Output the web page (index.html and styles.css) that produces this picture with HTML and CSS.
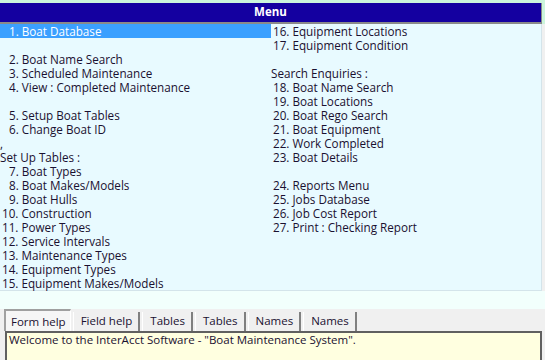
FILE: index.html
```html
<!DOCTYPE html>
<html lang="en">
<head>
  <meta charset="UTF-8" />
  <title>Menu</title>
  <link rel="stylesheet" href="styles.css">
</head>
<body>
  <div class="top">
    <div class="title-bar">Menu</div>
  </div>

  <div class="panel">
    <div class="col left">
      <div class="item one selected">1. Boat Database</div>
      <div class="item"></div>
      <div class="item one">2. Boat Name Search</div>
      <div class="item one">3. Scheduled Maintenance</div>
      <div class="item one">4. View : Completed Maintenance</div>
      <div class="item"></div>
      <div class="item one">5. Setup Boat Tables</div>
      <div class="item one">6. Change Boat ID</div>
      <div class="item">,</div>
      <div class="item">Set Up Tables :</div>
      <div class="item one">7. Boat Types</div>
      <div class="item one">8. Boat Makes/Models</div>
      <div class="item one">9. Boat Hulls</div>
      <div class="item two">10. Construction</div>
      <div class="item two">11. Power Types</div>
      <div class="item two">12. Service Intervals</div>
      <div class="item two">13. Maintenance Types</div>
      <div class="item two">14. Equipment Types</div>
      <div class="item two">15. Equipment Makes/Models</div>
    </div>
    <div class="col right">
      <div class="item two">16. Equipment Locations</div>
      <div class="item two">17. Equipment Condition</div>
      <div class="item"></div>
      <div class="item">Search Enquiries :</div>
      <div class="item two">18. Boat Name Search</div>
      <div class="item two">19. Boat Locations</div>
      <div class="item two">20. Boat Rego Search</div>
      <div class="item two">21. Boat Equipment</div>
      <div class="item two">22. Work Completed</div>
      <div class="item two">23. Boat Details</div>
      <div class="item"></div>
      <div class="item two">24. Reports Menu</div>
      <div class="item two">25. Jobs Database</div>
      <div class="item two">26. Job Cost Report</div>
      <div class="item two">27. Print : Checking Report</div>
    </div>
  </div>

  <div class="gap"></div>

  <div class="help">
    <div class="tabs">
      <div class="tab active">Form help</div>
      <div class="tab">Field help</div>
      <div class="tab">Tables</div>
      <div class="tab">Tables</div>
      <div class="tab">Names</div>
      <div class="tab">Names</div>
    </div>
    <div class="help-box">Welcome to the InterAcct Software - "Boat Maintenance System".</div>
  </div>
</body>
</html>
```

FILE: styles.css
```css
* {
  box-sizing: border-box;
}

body {
  margin: 0;
  width: 545px;
  height: 360px;
  overflow: hidden;
  background: #f0f0f0;
  font-family: "Open Sans", "Noto Sans", sans-serif;
  font-size: 11.7px;
  color: #1a1030;
}

.top {
  background: #ccf5dc;
  padding-top: 3px;
}

.title-bar {
  width: 542px;
  height: 21px;
  background: #1400a0;
  border-bottom: 2px solid #8a8a8a;
  border-right: 1px solid #8a8a8a;
  color: #fff;
  font-size: 11.5px;
  font-weight: bold;
  text-align: center;
  line-height: 18px;
}

.panel {
  display: grid;
  grid-template-columns: 271px 1fr;
  width: 542px;
  height: 267px;
  background: #e8faff;
  border-right: 1px solid #d4e4ea;
  border-bottom: 1px solid #d4e4ea;
}

.item {
  height: 14px;
  line-height: 14px;
  white-space: nowrap;
}

.left .one {
  padding-left: 9px;
}

.left .two,
.right .two {
  padding-left: 2px;
}

.item.selected {
  background: #3ba0ff;
  color: #fff;
}

.gap {
  height: 18px;
  background: #f2fffc;
}

.help {
  padding: 0 3px 0 4px;
}

.tabs {
  display: flex;
  align-items: flex-end;
  gap: 2px;
  height: 22px;
}

.tab {
  height: 19px;
  line-height: 18px;
  padding: 0 6px 0 7px;
  background: #f0f0f0;
  border-left: 1px solid #fff;
  border-right: 2px solid #808080;
  font-size: 11.5px;
}

.tab.active {
  height: 22px;
  line-height: 21px;
  background: #f6f6f6;
  border-top: 2px solid #a0a0a0;
  border-left: 2px solid #a0a0a0;
  border-right: 1px solid #fff;
  padding: 0 4px 0 5px;
}

.help-box {
  height: 40px;
  margin-left: 1px;
  background: #ffffe0;
  border: 2px solid #606060;
  border-bottom: none;
  padding: 0 2px;
  font-size: 11.5px;
  line-height: 14px;
}
```
